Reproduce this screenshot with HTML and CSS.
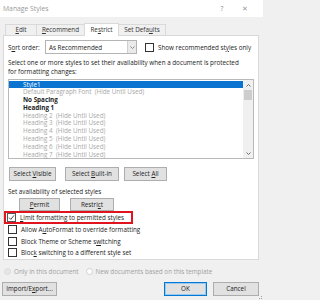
FILE: index.html
```html
<!DOCTYPE html>
<html>
<head>
<meta charset="utf-8">
<link rel="stylesheet" href="styles.css">
</head>
<body>
<div class="dialog">
  <div class="titlebar">
    <span class="title">Manage Styles</span>
    <span class="help">?</span>
    <span class="close">✕</span>
  </div>
  <div class="tabstrip">
    <div class="tab t-edit"><u>E</u>dit</div>
    <div class="tab t-rec"><u>R</u>ecommend</div>
    <div class="tab t-res active">Re<u>s</u>trict</div>
    <div class="tab t-def">Set Defa<u>u</u>lts</div>
  </div>
  <div class="panel">
    <div class="row sortrow">
      <span class="sortlabel">S<u>o</u>rt order:</span>
      <div class="combo">
        <span class="combotext">As Recommended</span>
        <span class="comboarrow"><svg width="5" height="3" viewBox="0 0 5 3"><path d="M0.5 0.5 L2.5 2.5 L4.5 0.5" fill="none" stroke="#777" stroke-width="0.8"/></svg></span>
      </div>
      <span class="cb"></span>
      <span class="cblabel">Show recommended st<u>y</u>les only</span>
    </div>
    <div class="desc">Select one or more styles to set their availability when a document is protected<br>for formatting changes:</div>
    <div class="listbox">
      <div class="items">
        <div class="item sel">Style1</div>
        <div class="item hid">Default Paragraph Font&nbsp; (Hide Until Used)</div>
        <div class="item strong">No Spacing</div>
        <div class="item strong">Heading 1</div>
        <div class="item hid">Heading 2&nbsp; (Hide Until Used)</div>
        <div class="item hid">Heading 3&nbsp; (Hide Until Used)</div>
        <div class="item hid">Heading 4&nbsp; (Hide Until Used)</div>
        <div class="item hid">Heading 5&nbsp; (Hide Until Used)</div>
        <div class="item hid">Heading 6&nbsp; (Hide Until Used)</div>
        <div class="item hid">Heading 7&nbsp; (Hide Until Used)</div>
      </div>
      <div class="vscroll">
        <span class="sarrow"><svg width="5" height="3" viewBox="0 0 5 3"><path d="M0.5 2.5 L2.5 0.5 L4.5 2.5" fill="none" stroke="#606060" stroke-width="0.9"/></svg></span>
        <span class="thumb"></span>
        <span class="strack"></span>
        <span class="sarrow"><svg width="5" height="3" viewBox="0 0 5 3"><path d="M0.5 0.5 L2.5 2.5 L4.5 0.5" fill="none" stroke="#606060" stroke-width="0.9"/></svg></span>
      </div>
    </div>
    <div class="row selrow">
      <div class="btn b-vis">Select <u>V</u>isible</div>
      <div class="btn b-bi">Select <u>B</u>uilt-in</div>
      <div class="btn b-all">Select <u>A</u>ll</div>
    </div>
    <div class="avail">Set availability of selected styles</div>
    <div class="row permrow">
      <div class="btn b-perm"><u>P</u>ermit</div>
      <div class="btn b-restr">Restri<u>c</u>t</div>
    </div>
    <div class="chk highlight">
      <span class="cb checked"><svg width="7" height="7" viewBox="0 0 7 7"><path d="M1 3.6 L2.8 5.4 L6 1.4" fill="none" stroke="#333" stroke-width="0.9"/></svg></span>
      <span class="cblabel"><u>L</u>imit formatting to permitted styles</span>
    </div>
    <div class="chk">
      <span class="cb"></span>
      <span class="cblabel">Allow A<u>u</u>toFormat to override formatting</span>
    </div>
    <div class="chk">
      <span class="cb"></span>
      <span class="cblabel">Block Theme or Scheme s<u>w</u>itching</span>
    </div>
    <div class="chk">
      <span class="cb"></span>
      <span class="cblabel">Bloc<u>k</u> switching to a different style set</span>
    </div>
  </div>
  <div class="radios">
    <span class="radio on"></span>
    <span class="rlabel r1">Only in this document</span>
    <span class="radio"></span>
    <span class="rlabel">New documents based on this template</span>
  </div>
  <div class="footer">
    <div class="btn b-imp">Import/E<u>x</u>port...</div>
    <div class="btn b-ok">OK</div>
    <div class="btn b-cancel">Cancel</div>
  </div>
  <div class="grip">
    <span></span><span></span><span></span>
  </div>
</div>
</body>
</html>
```

FILE: styles.css
```css
* { box-sizing: border-box; }
html, body { margin: 0; padding: 0; }
body {
  width: 263px;
  height: 300px;
  overflow: hidden;
  background: #f0f0f0;
  font-family: "Open Sans", "Noto Sans", sans-serif;
  font-size: 6.3px;
  color: #222;
}
u { text-decoration-thickness: 0.5px; text-underline-offset: 1px; }
.dialog { position: relative; width: 263px; height: 300px; }

.titlebar {
  height: 17px;
  background: #fff;
  display: flex;
  align-items: center;
  padding-left: 3px;
  color: #9a9a9a;
  font-size: 6.8px;
}
.title { flex: 1; }
.help { width: 8px; text-align: center; margin-right: 15px; color: #888; font-size: 6.5px; }
.close { width: 8px; text-align: center; margin-right: 14px; color: #999; font-size: 6.5px; }

.tabstrip {
  height: 18px;
  display: flex;
  align-items: flex-end;
  padding-left: 5px;
}
.tab {
  height: 11px;
  line-height: 10px;
  border: 1px solid #d9d9d9;
  border-bottom: none;
  border-right: none;
  background: #f0f0f0;
  text-align: center;
  white-space: nowrap;
  color: #333;
}
.t-edit { width: 31px; }
.t-rec { width: 48px; }
.t-res {
  width: 35px;
  height: 13px;
  line-height: 11px;
  background: #fff;
  border-right: 1px solid #d9d9d9;
  position: relative;
  z-index: 2;
  margin-bottom: -1px;
}
.t-def { width: 47px; border-left: none; border-right: 1px solid #d9d9d9; }

.panel {
  width: 256px;
  height: 225px;
  margin-left: 3px;
  background: #fff;
  border: 1px solid #d9d9d9;
  padding: 4px 0 0 4px;
  position: relative;
  z-index: 1;
}
.row { display: flex; align-items: center; }
.sortrow { height: 14px; }
.sortlabel { width: 37px; }
.combo {
  width: 92px;
  height: 14px;
  border: 1px solid #b4b4b4;
  display: flex;
  align-items: center;
  background: #fff;
}
.combotext { flex: 1; padding-left: 3px; }
.comboarrow {
  width: 9px;
  height: 12px;
  background: #eaeaea;
  border-left: 1px solid #d0d0d0;
  display: flex;
  align-items: center;
  justify-content: center;
}
.cb {
  width: 9px;
  height: 9px;
  border: 1px solid #333;
  background: #fff;
  flex: none;
  display: flex;
  align-items: center;
  justify-content: center;
}
.sortrow .cb { margin-left: 8px; }
.cblabel { margin-left: 4px; white-space: nowrap; }

.desc {
  margin-top: 4px;
  line-height: 9px;
  white-space: nowrap;
}
.listbox {
  margin-top: 3px;
  width: 246px;
  height: 80px;
  border: 1px solid #b9b9b9;
  display: flex;
}
.items { flex: 1; padding-top: 0.5px; }
.item {
  height: 7.8px;
  line-height: 7.8px;
  padding-left: 14px;
  white-space: nowrap;
}
.item.sel { background: #0a74d0; color: #fff; }
.item.hid { color: #a8a8a8; }
.item.strong { font-weight: 700; color: #222; }
.vscroll {
  width: 10px;
  background: #f0f0f0;
  display: flex;
  flex-direction: column;
  align-items: center;
}
.sarrow { height: 10px; display: flex; align-items: center; justify-content: center; }
.thumb { width: 8px; height: 10px; background: #cdcdcd; }
.strack { flex: 1; }

.btn {
  height: 14px;
  line-height: 12px;
  background: #e1e1e1;
  border: 1px solid #adadad;
  text-align: center;
  white-space: nowrap;
  color: #222;
  flex: none;
}
.selrow { margin-top: 8px; }
.b-vis { width: 47px; margin-left: 1px; }
.b-bi { width: 54px; margin-left: 9px; }
.b-all { width: 43px; margin-left: 5px; }

.avail { margin-top: 6px; height: 9px; line-height: 9px; }
.permrow { margin-top: 2px; height: 13px; }
.b-perm { width: 41px; height: 13px; line-height: 11px; margin-left: 11px; }
.b-restr { width: 44px; height: 13px; line-height: 11px; margin-left: 10px; }

.chk {
  display: flex;
  align-items: center;
  height: 11.6px;
}
.chk .cb { margin-left: 0; }
.chk.highlight {
  height: 13px;
  width: 129px;
  margin-left: -4px;
  border: 2px solid #e0141e;
  padding-left: 1px;
  position: relative;
  z-index: 3;
}
.cb.checked { border-color: #555; }

.radios {
  display: flex;
  align-items: center;
  height: 10px;
  margin-top: 6px;
  padding-left: 4px;
  color: #a0a0a0;
}
.radio {
  width: 7px;
  height: 7px;
  border-radius: 50%;
  border: 1px solid #d0d0d0;
  background: #fff;
  flex: none;
}
.radio.on { background: #e6e6e6; border-color: #dcdcdc; }
.rlabel { margin-left: 3px; white-space: nowrap; }
.r1 { margin-right: 7px; }

.footer {
  display: flex;
  margin-top: 6px;
  padding-left: 2px;
}
.footer .btn { height: 14px; }
.b-imp { width: 55px; }
.b-ok {
  width: 43px;
  margin-left: 107px;
  border: 1px solid #0078d7;
  box-shadow: inset 0 0 0 1px #9cc8ec;
}
.b-cancel { width: 46px; margin-left: 6px; }

.grip {
  position: absolute;
  right: 1px;
  bottom: 1px;
  width: 6px;
  height: 6px;
}
.grip span {
  position: absolute;
  width: 1px;
  height: 1px;
  background: #a0a0a0;
}
.grip span:nth-child(1) { right: 0; bottom: 0; }
.grip span:nth-child(2) { right: 2px; bottom: 0; }
.grip span:nth-child(3) { right: 0; bottom: 2px; }
```
